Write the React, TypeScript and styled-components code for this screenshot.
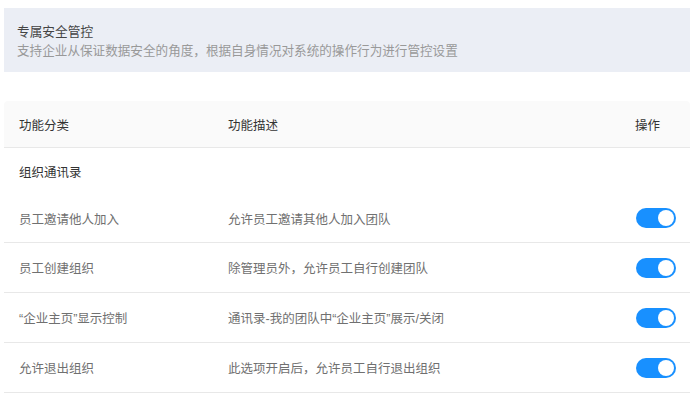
import React, { useState } from "react";
import styled, { createGlobalStyle } from "styled-components";

const Global = createGlobalStyle`
  html, body { margin: 0; padding: 0; background: #fff; }
  body { font-family: "Liberation Sans", "Noto Sans CJK SC", sans-serif; font-size: 12.5px; }
  * { box-sizing: border-box; }
`;

const Page = styled.div`
  padding: 8px 8px 0 4px;
`;

const Banner = styled.div`
  background: #ebeef5;
  height: 64px;
  padding: 14px 13px 0;
  display: flex;
  flex-direction: column;
`;

const BannerTitle = styled.div`
  font-size: 12.7px;
  line-height: 20px;
  color: #444;
`;

const BannerDesc = styled.div`
  font-size: 12.6px;
  line-height: 19px;
  color: #999;
`;

const Table = styled.div`
  margin-top: 29px;
  display: flex;
  flex-direction: column;
`;

const HeaderRow = styled.div`
  display: grid;
  grid-template-columns: 209px 1fr 70px;
  height: 47px;
  align-items: center;
  background: #fafafa;
  border-bottom: 1px solid #e8e8e8;
  border-radius: 4px 4px 0 0;
  color: #333;
`;

const Cell = styled.div<{ $muted?: boolean }>`
  padding-left: 15px;
  color: ${(p) => (p.$muted ? "#707070" : "inherit")};
  white-space: nowrap;
`;

const GroupRow = styled.div`
  height: 46px;
  display: flex;
  align-items: center;
  padding-left: 15px;
  color: #333;
`;

const Row = styled.div<{ $first?: boolean }>`
  display: grid;
  grid-template-columns: 209px 1fr 70px;
  height: ${(p) => (p.$first ? "49px" : "50px")};
  align-items: center;
  border-bottom: 1px solid #e8e8e8;
`;

const SwitchTrack = styled.button<{ $on: boolean }>`
  width: 40px;
  height: 20px;
  border-radius: 10px;
  border: none;
  padding: 0;
  margin-left: 16px;
  background: ${(p) => (p.$on ? "#1890ff" : "#c0c4cc")};
  position: relative;
  cursor: pointer;
  display: block;
`;

const Knob = styled.span<{ $on: boolean }>`
  position: absolute;
  top: 2px;
  left: ${(p) => (p.$on ? "22px" : "2px")};
  width: 16px;
  height: 16px;
  border-radius: 50%;
  background: #fff;
  transition: left 0.2s;
`;

const Toggle: React.FC<{ initial?: boolean }> = ({ initial = true }) => {
  const [on, setOn] = useState(initial);
  return (
    <SwitchTrack $on={on} onClick={() => setOn(!on)} aria-pressed={on}>
      <Knob $on={on} />
    </SwitchTrack>
  );
};

const rows = [
  ["员工邀请他人加入", "允许员工邀请其他人加入团队"],
  ["员工创建组织", "除管理员外，允许员工自行创建团队"],
  ["“企业主页”显示控制", "通讯录-我的团队中“企业主页”展示/关闭"],
  ["允许退出组织", "此选项开启后，允许员工自行退出组织"],
];

export default function App() {
  return (
    <>
      <Global />
      <Page>
        <Banner>
          <BannerTitle>专属安全管控</BannerTitle>
          <BannerDesc>支持企业从保证数据安全的角度，根据自身情况对系统的操作行为进行管控设置</BannerDesc>
        </Banner>
        <Table>
          <HeaderRow>
            <Cell>功能分类</Cell>
            <Cell>功能描述</Cell>
            <Cell>操作</Cell>
          </HeaderRow>
          <GroupRow>组织通讯录</GroupRow>
          {rows.map(([name, desc], i) => (
            <Row key={i} $first={i === 0}>
              <Cell $muted>{name}</Cell>
              <Cell $muted>{desc}</Cell>
              <div>
                <Toggle />
              </div>
            </Row>
          ))}
        </Table>
      </Page>
    </>
  );
}
